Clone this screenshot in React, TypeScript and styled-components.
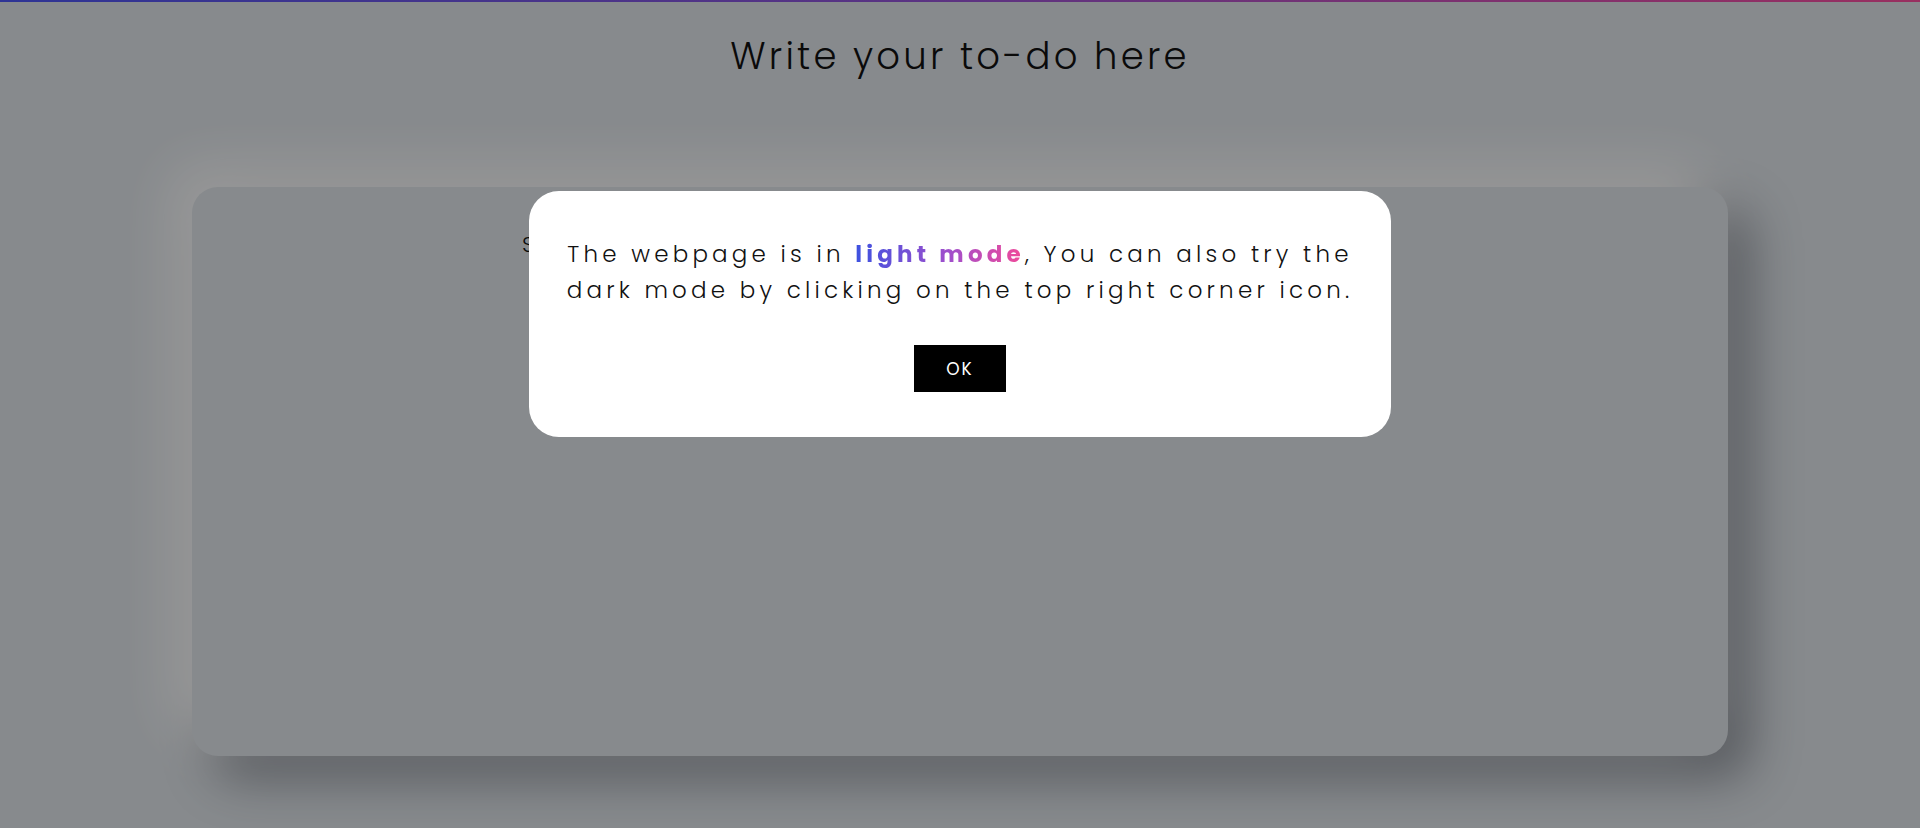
import React from "react";
import styled, { createGlobalStyle } from "styled-components";

const GlobalStyle = createGlobalStyle`
  html, body {
    margin: 0;
    padding: 0;
    background: #e1e6eb;
  }
  body {
    font-family: "Poppins", "Lato", "Open Sans", sans-serif;
    font-weight: 300;
    color: #111;
  }
  * { box-sizing: border-box; }
`;

const Page = styled.div`
  min-height: 828px;
  display: flex;
  flex-direction: column;
  align-items: center;
  overflow: hidden;
`;

const TopBar = styled.div`
  width: 100%;
  height: 2px;
  background: linear-gradient(90deg, #4d58f8 0%, #9a56d8 50%, #ff50a0 100%);
`;

const Title = styled.h1`
  margin: 33px 0 0;
  font-size: 37px;
  line-height: 42px;
  font-weight: 300;
  letter-spacing: 3.2px;
  color: #111;
`;

const Card = styled.section`
  margin-top: 110px;
  width: 1536px;
  height: 569px;
  border-radius: 26px;
  background: #e1e6eb;
  box-shadow: -22px -22px 55px #ffffff, 22px 22px 50px #8e939b;
  padding: 41px 0 0 330px;
`;

const Hint = styled.p`
  margin: 0;
  font-size: 22px;
  letter-spacing: 3px;
  color: #111;
`;

const Overlay = styled.div`
  position: fixed;
  inset: 0;
  background: rgba(0, 0, 0, 0.4);
  display: flex;
  justify-content: center;
  align-items: flex-start;
  padding-top: 191px;
`;

const Modal = styled.div`
  width: 862px;
  height: 246px;
  background: #ffffff;
  border-radius: 30px;
  padding: 45px 20px 0;
  display: flex;
  flex-direction: column;
  align-items: center;
`;

const Message = styled.p`
  margin: 0;
  text-align: center;
  font-size: 23px;
  line-height: 36px;
  letter-spacing: 4.2px;
  color: #111;
  font-weight: 300;
  white-space: nowrap;
`;

const Accent = styled.span`
  font-weight: 700;
  background: linear-gradient(90deg, #3d52e0 0%, #a04fcc 55%, #f24a98 100%);
  -webkit-background-clip: text;
  background-clip: text;
  color: transparent;
`;

const OkButton = styled.button`
  margin-top: 37px;
  width: 92px;
  height: 47px;
  border: none;
  background: #000;
  color: #fff;
  font-family: "Poppins", "Lato", "Open Sans", sans-serif;
  font-size: 17px;
  font-weight: 400;
  letter-spacing: 2px;
  cursor: pointer;
`;

export default function App() {
  return (
    <>
      <GlobalStyle />
      <Page>
        <TopBar />
        <Title>Write your to-do here</Title>
        <Card>
          <Hint>Start by adding your first task</Hint>
        </Card>
      </Page>
      <Overlay>
        <Modal>
          <Message>
            The webpage is in <Accent>light mode</Accent>, You can also try the
            <br />
            dark mode by clicking on the top right corner icon.
          </Message>
          <OkButton>OK</OkButton>
        </Modal>
      </Overlay>
    </>
  );
}
